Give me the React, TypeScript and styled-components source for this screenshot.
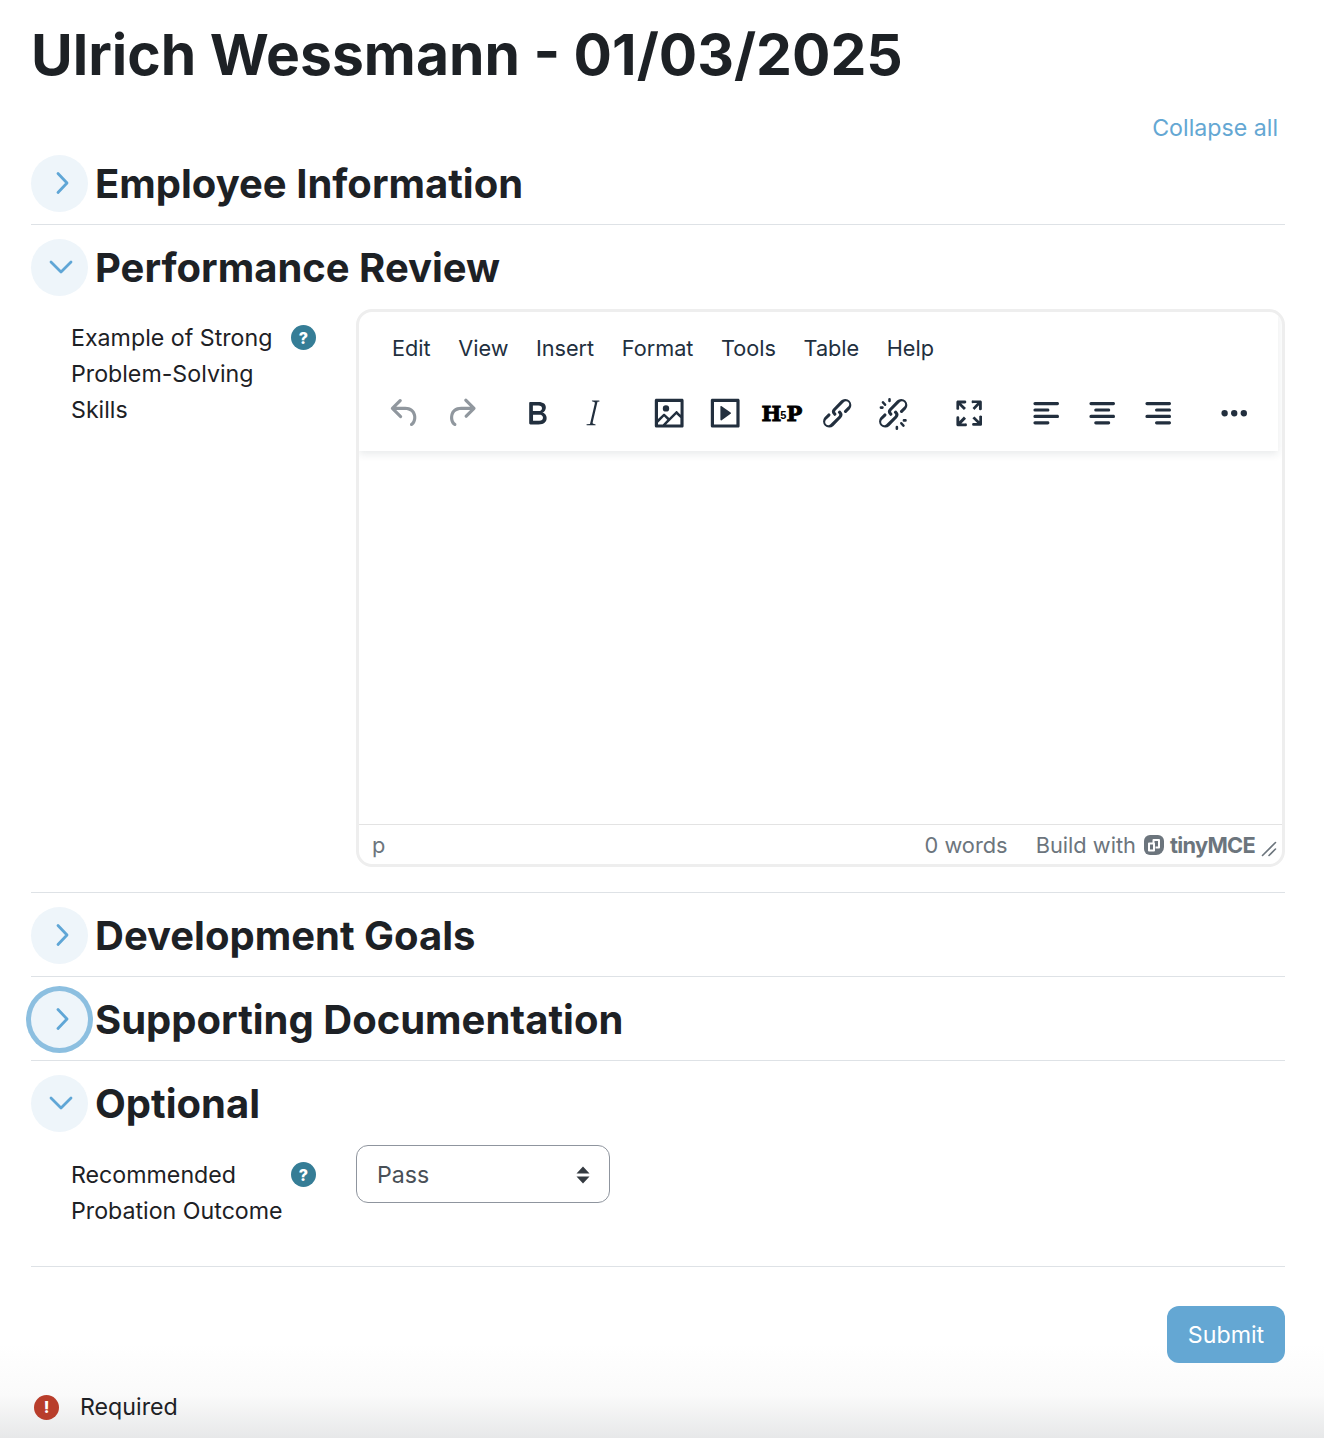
import styled, { createGlobalStyle } from 'styled-components';

const icons: Record<string, string> = {
  undo: 'M6.4 8H12c3.7 0 6.2 2 6.8 5.1.6 2.7-.4 5.6-2.3 6.8a1 1 0 0 1-1-1.8c1.1-.6 1.8-2.7 1.4-4.6-.5-2.1-2.1-3.5-4.9-3.5H6.4l3.3 3.3a1 1 0 1 1-1.4 1.4l-5-5a1 1 0 0 1 0-1.4l5-5a1 1 0 0 1 1.4 1.4L6.4 8Z',
  redo: 'M17.6 10H12c-2.8 0-4.4 1.4-4.9 3.5-.4 2 .3 4 1.4 4.6a1 1 0 1 1-1 1.8c-2-1.2-2.9-4.1-2.3-6.8.6-3 3-5.1 6.8-5.1h5.6l-3.3-3.3a1 1 0 1 1 1.4-1.4l5 5a1 1 0 0 1 0 1.4l-5 5a1 1 0 0 1-1.4-1.4l3.3-3.3Z',
  bold: 'M7.8 19c-.3 0-.5 0-.6-.2l-.2-.5V5.7c0-.2 0-.4.2-.5l.6-.2h5c1.5 0 2.7.3 3.5 1 .7.6 1.1 1.4 1.1 2.5a3 3 0 0 1-.6 1.9c-.4.6-1 1-1.6 1.2.4.1.9.3 1.3.6s.8.7 1 1.2c.3.4.4 1 .4 1.6 0 1.3-.4 2.3-1.3 3-.8.7-2 1-3.8 1H7.8Zm5-8.3c.6 0 1.2-.1 1.6-.5.4-.3.6-.7.6-1.3 0-1.1-.8-1.7-2.3-1.7H9.3v3.5h3.4Zm.5 6c.7 0 1.3-.1 1.7-.4.4-.4.6-.9.6-1.5s-.2-1-.7-1.4c-.4-.3-1-.4-2-.4H9.4v3.8h4Z',
  italic: 'M16.7 4.7l-2 .2-3 12.8c-.1.7 0 1 .9 1.1l.9.2v.6H8a.4.4 0 0 1 0-.7l2-.2 3-12.8c.1-.7 0-1-.9-1.1l-.9-.2v-.6h4.500a.4.4 0 0 1 0 .7Z',
  image: 'm5 15.7 3.3-3.2c.3-.3.7-.3 1 0L12 15l4.1-4c.3-.4.8-.4 1 0l2 1.9V5H5v10.7ZM5 18V19h3l2.8-2.9-2-2L5 17.9Zm14-3-2.5-2.4-6.4 6.5H19v-4ZM4 3h16c.6 0 1 .4 1 1v16c0 .6-.4 1-1 1H4a1 1 0 0 1-1-1V4c0-.6.4-1 1-1Zm6 8a2 2 0 1 0 0-4 2 2 0 0 0 0 4Z',
  embed: 'M4 3h16c.6 0 1 .4 1 1v16c0 .6-.4 1-1 1H4a1 1 0 0 1-1-1V4c0-.6.4-1 1-1Zm1 2v14h14V5H5Zm4.8 2.6 5.6 4a.5.5 0 0 1 0 .8l-5.6 4A.5.5 0 0 1 9 16V8a.5.5 0 0 1 .8-.4Z',
  link: 'M6.2 12.3a1 1 0 0 1 1.4 1.4l-2 2a2 2 0 1 0 2.6 2.8l4.8-4.8a1 1 0 0 0 0-1.4 1 1 0 1 1 1.4-1.3 2.9 2.9 0 0 1 0 4L9.6 20a3.9 3.9 0 0 1-5.5-5.5l2-2Zm11.6-.6a1 1 0 0 1-1.4-1.4l2-2a2 2 0 1 0-2.6-2.8L11 10.3a1 1 0 0 0 0 1.4A1 1 0 1 1 9.6 13a2.9 2.9 0 0 1 0-4L14.4 4a3.9 3.9 0 0 1 5.5 5.5l-2 2Z',
  unlink: 'M6.2 12.3a1 1 0 0 1 1.4 1.4l-2 2a2 2 0 1 0 2.6 2.8l4.8-4.8a1 1 0 0 0 0-1.4 1 1 0 1 1 1.4-1.3 2.9 2.9 0 0 1 0 4L9.6 20a3.9 3.9 0 0 1-5.5-5.5l2-2Zm11.6-.6a1 1 0 0 1-1.4-1.4l2.1-2a2 2 0 1 0-2.7-2.8L11 10.3a1 1 0 0 0 0 1.4A1 1 0 1 1 9.6 13a2.9 2.9 0 0 1 0-4L14.4 4a3.9 3.9 0 0 1 5.5 5.5l-2 2ZM7.6 6.3a.8.8 0 0 1-1.1 1.1L4.9 5.6a.8.8 0 0 1 1.1-1.1l1.6 1.8Zm-2.3 3h-1a.8.8 0 0 1 0-1.6h1a.8.8 0 0 1 0 1.6Zm3.6-5v-1a.8.8 0 0 1 1.6 0v1a.8.8 0 0 1-1.6 0Zm7.5 14.4a.8.8 0 0 1 1.1-1.1l1.6 1.8a.8.8 0 0 1-1.1 1.1l-1.6-1.8Zm2.3-3h1a.8.8 0 0 1 0 1.6h-1a.8.8 0 0 1 0-1.6Zm-3.6 5v1a.8.8 0 0 1-1.6 0v-1a.8.8 0 0 1 1.6 0Z',
  fullscreen: 'm15.3 10-1.2-1.3 2.9-3h-2.3a.9.9 0 1 1 0-1.7H19c.5 0 .9.4.9.9v4.4a.9.9 0 1 1-1.8 0V7l-2.9 3Zm0 4 3 3v-2.3a.9.9 0 1 1 1.7 0V19c0 .5-.4.9-.9.9h-4.4a.9.9 0 1 1 0-1.8H17l-3-2.9 1.3-1.2ZM10 15.4l-2.9 3h2.3a.9.9 0 1 1 0 1.7H5a.9.9 0 0 1-1-.9v-4.4a.9.9 0 1 1 1.8 0V17l2.9-3 1.2 1.3ZM8.7 10 5.7 7v2.3a.9.9 0 0 1-1.7 0V5c0-.5.4-.9.9-.9h4.4a.9.9 0 0 1 0 1.8H7l3 2.9-1.3 1.2Z',
  alignLeft: 'M5 5h14c.6 0 1 .4 1 1s-.4 1-1 1H5a1 1 0 1 1 0-2Zm0 4h8c.6 0 1 .4 1 1s-.4 1-1 1H5a1 1 0 1 1 0-2Zm0 8h8c.6 0 1 .4 1 1s-.4 1-1 1H5a1 1 0 0 1 0-2Zm0-4h14c.6 0 1 .4 1 1s-.4 1-1 1H5a1 1 0 0 1 0-2Z',
  alignCenter: 'M5 5h14c.6 0 1 .4 1 1s-.4 1-1 1H5a1 1 0 1 1 0-2Zm3 4h8c.6 0 1 .4 1 1s-.4 1-1 1H8a1 1 0 1 1 0-2Zm0 8h8c.6 0 1 .4 1 1s-.4 1-1 1H8a1 1 0 0 1 0-2Zm-3-4h14c.6 0 1 .4 1 1s-.4 1-1 1H5a1 1 0 0 1 0-2Z',
  alignRight: 'M5 5h14c.6 0 1 .4 1 1s-.4 1-1 1H5a1 1 0 1 1 0-2Zm6 4h8c.6 0 1 .4 1 1s-.4 1-1 1h-8a1 1 0 0 1 0-2Zm0 8h8c.6 0 1 .4 1 1s-.4 1-1 1h-8a1 1 0 0 1 0-2Zm-6-4h14c.6 0 1 .4 1 1s-.4 1-1 1H5a1 1 0 0 1 0-2Z',
  more: 'M6 10a2 2 0 0 0-2 2c0 1.1.9 2 2 2a2 2 0 0 0 2-2 2 2 0 0 0-2-2Zm12 0a2 2 0 0 0-2 2c0 1.1.9 2 2 2a2 2 0 0 0 2-2 2 2 0 0 0-2-2Zm-6 0a2 2 0 0 0-2 2c0 1.1.9 2 2 2a2 2 0 0 0 2-2 2 2 0 0 0-2-2Z',
};

const toolbarGroups = [
  ['undo', 'redo'],
  ['bold', 'italic'],
  ['image', 'embed', 'h5p', 'link', 'unlink'],
  ['fullscreen'],
  ['alignLeft', 'alignCenter', 'alignRight'],
  ['more'],
];

const menuItems = ['Edit', 'View', 'Insert', 'Format', 'Tools', 'Table', 'Help'];

const Chevron = ({ open }: { open: boolean }) => (
  <svg
    width='32'
    height='32'
    viewBox='0 0 32 32'
    fill='none'
  >
    <path
      d={open ? 'M7 11 17 21 27 11' : 'M14 6.500 23 16 14 25.500'}
      stroke='#5fa6d6'
      strokeWidth='2.8'
      strokeLinecap='round'
      strokeLinejoin='round'
    />
  </svg>
);

const SectionHeader = ({
  title,
  open = false,
  focused = false,
}: {
  title: string;
  open?: boolean;
  focused?: boolean;
}) => (
  <HeaderRow>
    <Toggle $focused={focused}>
      <Chevron open={open} />
    </Toggle>
    <Heading>{title}</Heading>
  </HeaderRow>
);

const FieldLabel = ({ text, top }: { text: string; top: number }) => (
  <LabelCell $top={top}>
    <LabelText>{text}</LabelText>
    <HelpBadge>?</HelpBadge>
  </LabelCell>
);

export default function App() {
  return (
    <Page>
      <GlobalStyle />
      <Content>
        <Title>Ulrich Wessmann - 01/03/2025</Title>
        <CollapseRow>
          <CollapseLink>Collapse all</CollapseLink>
        </CollapseRow>

        <Section>
          <SectionHeader title='Employee Information' />
        </Section>

        <Section>
          <SectionHeader
            title='Performance Review'
            open
          />
          <FormRow $bottom={12}>
            <FieldLabel
              text='Example of Strong Problem-Solving Skills'
              top={11}
            />
            <Editor>
              <EditorHeader>
                <MenuBar>
                  {menuItems.map((item) => (
                    <span key={item}>{item}</span>
                  ))}
                </MenuBar>
                <Toolbar>
                  {toolbarGroups.map((group) => (
                    <ToolGroup key={group[0]}>
                      {group.map((name) => (
                        <ToolButton
                          key={name}
                          $disabled={name === 'undo' || name === 'redo'}
                        >
                          {name === 'h5p' ? (
                            <H5pLogo>
                              H<small>5</small>P
                            </H5pLogo>
                          ) : (
                            <svg
                              width='38.4'
                              height='38.4'
                              viewBox='0 0 24 24'
                              fill='currentColor'
                            >
                              <path
                                fillRule='evenodd'
                                d={icons[name]}
                              />
                            </svg>
                          )}
                        </ToolButton>
                      ))}
                    </ToolGroup>
                  ))}
                </Toolbar>
              </EditorHeader>
              <EditArea />
              <StatusBar>
                <span>p</span>
                <StatusRight>
                  <span>0 words</span>
                  <Branding>
                    Build with
                    <svg
                      width='22'
                      height='22'
                      viewBox='0 0 22 22'
                    >
                      <path
                        fill='#6c757d'
                        d='M7 1h8a6 6 0 0 1 6 6v6a8 8 0 0 1-8 8H7a6 6 0 0 1-6-6V7a6 6 0 0 1 6-6Z'
                      />
                      <path
                        fill='none'
                        stroke='#ffffff'
                        strokeWidth='2'
                        strokeLinejoin='round'
                        d='M10.500 9.500V6h5.500v7.500h-3.500M6 9.500h5v7H6v-7Z'
                      />
                    </svg>
                    <TinyWord>tinyMCE</TinyWord>
                  </Branding>
                  <svg
                    width='16'
                    height='16'
                    viewBox='0 0 16 16'
                  >
                    <path
                      d='M1.500 14.500 14.500 1.500M8 14.500l6.500-6.500'
                      stroke='#6c757d'
                      strokeWidth='1.6'
                      strokeLinecap='round'
                    />
                  </svg>
                </StatusRight>
              </StatusBar>
            </Editor>
          </FormRow>
        </Section>

        <Section>
          <SectionHeader title='Development Goals' />
        </Section>

        <Section>
          <SectionHeader
            title='Supporting Documentation'
            focused
          />
        </Section>

        <Section>
          <SectionHeader
            title='Optional'
            open
          />
          <FormRow $bottom={24}>
            <FieldLabel
              text='Recommended Probation Outcome'
              top={12}
            />
            <SelectBox>
              Pass
              <svg
                width='14'
                height='18'
                viewBox='0 0 14 18'
                fill='#343a40'
              >
                <path d='M7 .5 13.500 7.500H.5ZM7 17.500.5 10.500h13Z' />
              </svg>
            </SelectBox>
          </FormRow>
        </Section>
      </Content>

      <Footer>
        <SubmitRow>
          <SubmitButton>Submit</SubmitButton>
        </SubmitRow>
        <RequiredRow>
          <ErrorBadge>!</ErrorBadge>
          <span>Required</span>
        </RequiredRow>
      </Footer>
    </Page>
  );
}

const GlobalStyle = createGlobalStyle`
  * {
    box-sizing: border-box;
  }

  body {
    margin: 0;
    background: #ffffff;
    color: #1d2125;
    font-family: Inter, 'Noto Sans', sans-serif;
  }
`;

const Page = styled.div`
  display: flex;
  flex-direction: column;
  height: 1438px;
  overflow: hidden;
`;

const Content = styled.main`
  flex: 1;
  min-height: 0;
  padding: 16px 39px 0 31px;
`;

const Title = styled.h1`
  margin: 0;
  font-size: 57px;
  line-height: 78px;
  font-weight: 700;
`;

const CollapseRow = styled.div`
  display: flex;
  justify-content: flex-end;
  padding-right: 7px;
  margin-top: 16px;
  height: 45px;
  line-height: 36px;
`;

const CollapseLink = styled.a`
  color: #64a7d3;
  font-size: 23.2px;
`;

const Section = styled.section`
  padding-bottom: 13px;
  border-bottom: 1px solid #dee2e6;

  & + & {
    padding-top: 14px;
  }
`;

const HeaderRow = styled.div`
  display: flex;
  align-items: center;
  gap: 7px;
  height: 56px;
`;

const Toggle = styled.span<{ $focused: boolean }>`
  display: flex;
  align-items: center;
  justify-content: center;
  width: 57px;
  height: 57px;
  border-radius: 50%;
  background: #eef5fa;
  box-shadow: ${({ $focused }) => ($focused ? '0 0 0 5px #8cbfe0' : 'none')};
`;

const Heading = styled.h3`
  margin: 0;
  padding-top: 2px;
  font-size: 40px;
  line-height: 48px;
  font-weight: 700;
`;

const FormRow = styled.div<{ $bottom: number }>`
  display: grid;
  grid-template-columns: 285px 1fr;
  align-items: start;
  padding: 14px 0 ${({ $bottom }) => $bottom}px 40px;
`;

const LabelCell = styled.div<{ $top: number }>`
  display: flex;
  align-items: flex-start;
  padding-top: ${({ $top }) => $top}px;
`;

const LabelText = styled.label`
  width: 220px;
  font-size: 23.2px;
  line-height: 36px;
`;

const Badge = styled.span`
  display: flex;
  flex: none;
  align-items: center;
  justify-content: center;
  width: 25px;
  height: 25px;
  border-radius: 50%;
  color: #ffffff;
  font-size: 16px;
  font-weight: 800;
  line-height: 1;
`;

const HelpBadge = styled(Badge)`
  margin-top: 5px;
  background: #357d96;
`;

const ErrorBadge = styled(Badge)`
  background: #b83d2b;
`;

const Editor = styled.div`
  display: flex;
  flex-direction: column;
  height: 558px;
  border: 3px solid #eeeeee;
  border-radius: 16px;
  overflow: hidden;
`;

const EditorHeader = styled.div`
  height: 139px;
  padding-left: 18px;
  box-shadow: 0 3px 8px rgba(34, 47, 62, 0.1);
  margin: 0 4px 0 0;
`;

const MenuBar = styled.div`
  display: flex;
  gap: 27.5px;
  padding: 7px 0 0 15px;
  height: 64px;
  align-items: center;
  color: #222f3e;
  font-size: 21.7px;
`;

const Toolbar = styled.div`
  display: flex;
  gap: 20.2px;
  height: 74px;
  align-items: center;
`;

const ToolGroup = styled.div`
  display: flex;
`;

const ToolButton = styled.span<{ $disabled: boolean }>`
  display: flex;
  align-items: center;
  justify-content: center;
  width: 56px;
  height: 56px;
  color: ${({ $disabled }) => ($disabled ? 'rgba(34, 47, 62, 0.5)' : '#222f3e')};
`;

const H5pLogo = styled.span`
  color: #000000;
  font-family: 'DejaVu Serif', serif;
  font-weight: 700;
  font-size: 21px;
  letter-spacing: -1px;
  -webkit-text-stroke: 0.9px #000000;

  small {
    position: relative;
    top: -2px;
    font-family: 'Liberation Sans', sans-serif;
    font-size: 11px;
    margin: 0 1px 0 0;
    -webkit-text-stroke: 0;
  }
`;

const EditArea = styled.div`
  flex: 1;
`;

const StatusBar = styled.div`
  display: flex;
  align-items: center;
  justify-content: space-between;
  height: 40px;
  padding: 0 5px 0 13px;
  border-top: 1px solid #e3e3e3;
  color: #6c757d;
  font-size: 21.8px;
`;

const StatusRight = styled.div`
  display: flex;
  align-items: center;
  gap: 28px;

  > svg {
    margin: 8px 0 0 -22px;
  }
`;

const Branding = styled.span`
  display: flex;
  align-items: center;
  gap: 7px;
`;

const TinyWord = styled.span`
  font-weight: 700;
  margin-left: -2px;
  letter-spacing: -0.7px;
`;

const SelectBox = styled.div`
  display: flex;
  align-items: center;
  justify-content: space-between;
  width: 254px;
  height: 58px;
  padding: 2px 19px 0 20px;
  border: 1px solid #8f959e;
  border-radius: 12px;
  color: #495057;
  font-size: 23.2px;
`;

const Footer = styled.footer`
  flex: none;
  height: 171px;
  padding: 39px 39px 0 34px;
  background: linear-gradient(to bottom, #ffffff 45%, #fafafa 75%, #e7e8e9 100%);
`;

const SubmitRow = styled.div`
  display: flex;
  justify-content: flex-end;
`;

const SubmitButton = styled.button`
  width: 118px;
  height: 57px;
  border: none;
  border-radius: 12px;
  background: #64a7d3;
  color: #ffffff;
  font-family: inherit;
  font-size: 23.2px;
`;

const RequiredRow = styled.div`
  display: flex;
  align-items: center;
  gap: 21px;
  margin-top: 26px;
  font-size: 23.2px;
  line-height: 36px;
`;
